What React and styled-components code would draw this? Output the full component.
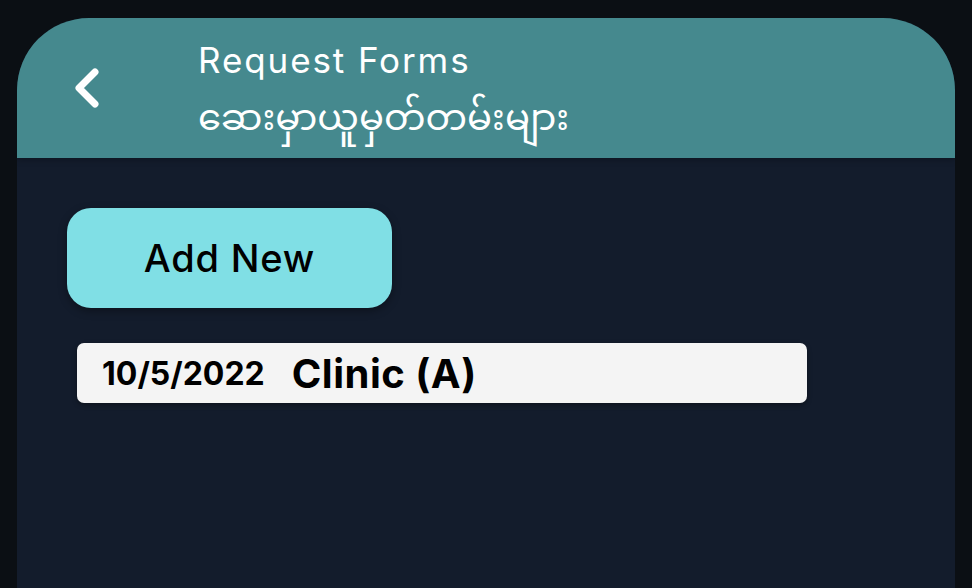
import React from 'react';
import styled, { createGlobalStyle } from 'styled-components';

const GlobalStyle = createGlobalStyle`
  html, body {
    margin: 0;
    padding: 0;
    background: #0b0f14;
    font-family: Inter, "Noto Sans", "Noto Sans Myanmar", sans-serif;
  }
`;

const Page = styled.div`
  padding: 18px 17px 0 17px;
  height: 588px;
  box-sizing: border-box;
  overflow: hidden;
`;

const Screen = styled.div`
  height: 100%;
  background: #131c2c;
  border-radius: 72px 72px 0 0;
  overflow: hidden;
  display: flex;
  flex-direction: column;
`;

const Header = styled.header`
  height: 140px;
  flex-shrink: 0;
  background: #45898e;
  display: flex;
  align-items: flex-start;
  box-shadow: 0 2px 6px rgba(0, 0, 0, 0.25);
`;

const BackButton = styled.button`
  align-self: center;
  margin-left: 52px;
  width: 36px;
  height: 44px;
  padding: 0;
  border: none;
  background: none;
  display: flex;
  align-items: center;
  justify-content: center;
  cursor: pointer;
`;

const TitleBlock = styled.div`
  margin-left: 93px;
  margin-top: 22px;
  color: #ffffff;
  display: flex;
  flex-direction: column;
`;

const Title = styled.div`
  font-size: 35px;
  line-height: 40px;
  font-weight: 400;
  letter-spacing: 1.9px;
`;

const Subtitle = styled.div`
  margin-top: 14px;
  font-family: "Noto Sans Myanmar", "Padauk", "Noto Sans", sans-serif;
  font-size: 37px;
  line-height: 56px;
`;

const Content = styled.main`
  padding: 50px 0 0 50px;
  display: flex;
  flex-direction: column;
  align-items: flex-start;
`;

const AddButton = styled.button`
  width: 325px;
  height: 100px;
  border: none;
  border-radius: 24px;
  background: #80dfe5;
  color: #000;
  font-family: Inter, "Noto Sans", sans-serif;
  font-size: 38px;
  font-weight: 500;
  letter-spacing: 0.8px;
  box-shadow: 0 3px 8px rgba(0, 0, 0, 0.35);
  cursor: pointer;
`;

const Record = styled.div`
  margin: 35px 0 0 10px;
  width: 730px;
  height: 60px;
  box-sizing: border-box;
  padding: 0 0 0 25px;
  background: #f4f4f4;
  border-radius: 7px;
  display: flex;
  align-items: center;
  gap: 27px;
  color: #000;
  font-weight: 700;
  box-shadow: 0 2px 5px rgba(0, 0, 0, 0.35);
`;

const RecordDate = styled.span`
  font-size: 32px;
`;

const RecordName = styled.span`
  font-size: 40px;
  letter-spacing: 0.5px;
`;

const records = [{ date: '10/5/2022', name: 'Clinic (A)' }];

export default function App() {
  return (
    <>
      <GlobalStyle />
      <Page>
        <Screen>
          <Header>
            <BackButton aria-label="Back">
              <svg width="28" height="40" viewBox="0 0 28 40">
                <path d="M22 4 L6 20 L22 36" fill="none" stroke="#fff" strokeWidth="7" strokeLinecap="round" strokeLinejoin="round" />
              </svg>
            </BackButton>
            <TitleBlock>
              <Title>Request Forms</Title>
              <Subtitle>ဆေးမှာယူမှတ်တမ်းများ</Subtitle>
            </TitleBlock>
          </Header>
          <Content>
            <AddButton>Add New</AddButton>
            {records.map(r => (
              <Record key={r.date + r.name}>
                <RecordDate>{r.date}</RecordDate>
                <RecordName>{r.name}</RecordName>
              </Record>
            ))}
          </Content>
        </Screen>
      </Page>
    </>
  );
}
